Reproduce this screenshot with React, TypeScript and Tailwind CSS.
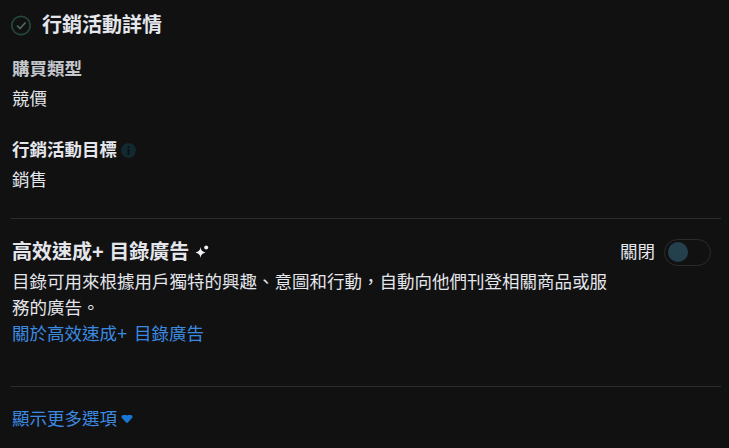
export default function App() {
  return (
    <div
      className="w-[729px] h-[448px] overflow-hidden bg-[#111112] text-[17.5px] text-[#e4e6eb] leading-[26px] pl-[12px] pr-[8px]"
      style={{ fontFamily: '"Liberation Sans", "Noto Sans CJK TC", sans-serif' }}
    >
      <div className="flex items-center h-[28px] mt-[11px] -ml-[2px] gap-[11px]">
        <svg width="21" height="21" viewBox="0 0 21 21" fill="none" className="shrink-0">
          <circle cx="11" cy="10.5" r="9.2" stroke="#25483b" strokeWidth="1.7" />
          <path d="M7 10.500l3 3 5.500-6" stroke="#4c6b5b" strokeWidth="1.7" fill="none" />
        </svg>
        <div className="text-[20px] font-bold leading-[28px]">行銷活動詳情</div>
      </div>
      <div className="mt-[17px] font-bold text-[#c4c7cc]">購買類型</div>
      <div className="mt-[4px]">競價</div>
      <div className="mt-[25px] flex items-center gap-[4px]">
        <span className="font-bold">行銷活動目標</span>
        <svg width="15" height="15" viewBox="0 0 15 15">
          <circle cx="7.5" cy="7.5" r="7.5" fill="#12292f" />
          <rect x="6.500" y="3" width="2" height="2" fill="#0a1214" />
          <rect x="6.500" y="6" width="2" height="6" fill="#0a1214" />
        </svg>
      </div>
      <div className="mt-[4px]">銷售</div>
      <div className="mt-[25px] -ml-[1px] h-px bg-[#2b2c2d]" />
      <div className="mt-[19px] flex">
        <div className="w-[600px]">
          <div className="flex items-center gap-[6px] h-[28px]">
            <span className="font-bold text-[20px]">高效速成+ 目錄廣告</span>
            <svg width="14" height="14" viewBox="0 0 14 14" fill="#f0f2f5">
              <path d="M5.500 2C6 5 6.500 6 10.500 7.500 6.500 9 6 10 5.500 13 5 10 4.500 9 .5 7.500 4.500 6 5 5 5.500 2z" />
              <circle cx="11.200" cy="2.500" r="2" />
            </svg>
          </div>
          <div className="mt-[3px]">目錄可用來根據用戶獨特的興趣、意圖和行動，自動向他們刊登相關商品或服務的廣告。</div>
          <div className="text-[#3c8ae0] [word-spacing:2px]">關於高效速成+ 目錄廣告</div>
        </div>
        <div className="ml-[8px] flex items-center h-[28px] gap-[9px]">
          <span>關閉</span>
          <div className="w-[47px] h-[27px] rounded-full border border-[#2b2c2d] flex items-center pl-[3px]">
            <div className="w-[20px] h-[20px] rounded-full bg-[#25404d]" />
          </div>
        </div>
      </div>
      <div className="mt-[39px] -ml-[1px] h-px bg-[#2b2c2d]" />
      <div className="mt-[19px] flex items-center gap-[4px] text-[#3c8ae0]">
        <span>顯示更多選項</span>
        <svg width="12" height="9" viewBox="0 0 12 9">
          <path d="M.5 1.800C.5.700 1.300 0 2.300 0H4.800C5.300 0 5.700.3 6 .6 6.300.3 6.700 0 7.200 0H9.700C10.700 0 11.500.7 11.500 1.800c0 .5-.2.900-.5 1.200L6.900 7.600c-.5.500-1.300.500-1.800 0L1 3C.7 2.700.5 2.300.5 1.800z" fill="#1877d5" />
        </svg>
      </div>
    </div>
  );
}
